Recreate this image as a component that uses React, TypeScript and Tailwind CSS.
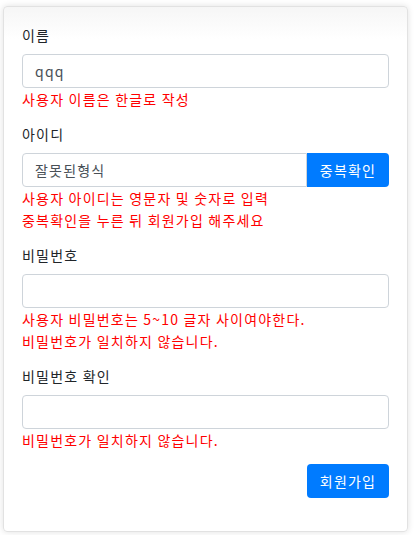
import { useState } from "react";

const font = { fontFamily: '"Noto Sans CJK KR", "Noto Sans", sans-serif' };

function Field({
  label,
  value,
  onChange,
  type = "text",
  errors,
  action,
}: {
  label: string;
  value: string;
  onChange: (v: string) => void;
  type?: string;
  errors: string[];
  action?: string;
}) {
  return (
    <div className="mb-[13px]">
      <label className="block text-[14px] leading-[22px] tracking-[1.2px] text-[#212529] mb-2">{label}</label>
      <div className="flex">
        <input
          type={type}
          value={value}
          onChange={(e) => onChange(e.target.value)}
          className={
            "h-[34px] flex-1 min-w-0 border border-[#ced4da] bg-white px-3 text-[14px] tracking-[1.2px] text-[#495057] outline-none " +
            (action ? "rounded-l" : "rounded")
          }
        />
        {action && (
          <button className="h-[34px] w-[82px] shrink-0 rounded-r bg-[#007bff] text-[14px] tracking-[1.2px] text-white">
            {action}
          </button>
        )}
      </div>
      {errors.map((e) => (
        <p key={e} className="text-[14px] leading-[22px] tracking-[1.2px] text-[#ff0000]">
          {e}
        </p>
      ))}
    </div>
  );
}

export default function App() {
  const [name, setName] = useState("qqq");
  const [id, setId] = useState("잘못된형식");
  const [pw, setPw] = useState("");
  const [pw2, setPw2] = useState("");

  return (
    <div className="min-h-[535px] bg-white pt-[6px] pl-[3px]" style={font}>
      <div className="w-[405px] h-[526px] rounded border border-[#e2e2e2] bg-[linear-gradient(to_bottom,#f6f6f6,#ffffff_32px)] shadow-[0_0_6px_rgba(0,0,0,0.12)] px-[18px] pt-[17px]">
        <Field label="이름" value={name} onChange={setName} errors={["사용자 이름은 한글로 작성"]} />
        <Field
          label="아이디"
          value={id}
          onChange={setId}
          action="중복확인"
          errors={["사용자 아이디는 영문자 및 숫자로 입력", "중복확인을 누른 뒤 회원가입 해주세요"]}
        />
        <Field
          label="비밀번호"
          type="password"
          value={pw}
          onChange={setPw}
          errors={["사용자 비밀번호는 5~10 글자 사이여야한다.", "비밀번호가 일치하지 않습니다."]}
        />
        <Field
          label="비밀번호 확인"
          type="password"
          value={pw2}
          onChange={setPw2}
          errors={["비밀번호가 일치하지 않습니다."]}
        />
        <div className="flex justify-end">
          <button className="h-[34px] w-[82px] rounded bg-[#007bff] text-[14px] tracking-[1.2px] text-white">회원가입</button>
        </div>
      </div>
    </div>
  );
}
